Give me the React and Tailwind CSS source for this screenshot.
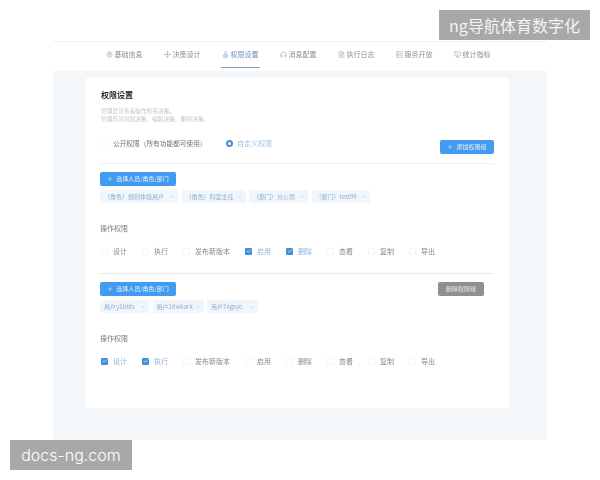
import React from "react";
import { Settings, Move, Stamp, Headphones, FileText, Server, MonitorCheck, Plus, Check, X } from "lucide-react";

const FONT = { fontFamily: '"Noto Sans CJK SC", "Noto Sans", sans-serif' };

const tabs = [
  [Settings, "基础信息"],
  [Move, "决策设计"],
  [Stamp, "权限设置", true],
  [Headphones, "消息配置"],
  [FileText, "执行日志"],
  [Server, "服务开放"],
  [MonitorCheck, "统计指标"],
];

function Tab({ icon: Icon, label, active }) {
  return (
    <div className={"flex h-[26px] w-[39px] items-center justify-center gap-[2px] border-b " + (active ? "border-[#7fa6c4] text-[#6f8fc4]" : "border-transparent text-[#8a8f96]")}>
      <Icon size={7} strokeWidth={1.5} className="shrink-0" />
      <span className="text-[7px] leading-none whitespace-nowrap">{label}</span>
    </div>
  );
}

function BlueButton({ children, className = "" }) {
  return (
    <div className={"flex h-[14px] items-center justify-center gap-[3px] rounded-[2px] bg-[#419bf0] text-[6px] leading-none text-[#e4f0fc] " + className}>
      <Plus size={6} strokeWidth={2} />
      <span className="whitespace-nowrap">{children}</span>
    </div>
  );
}

function Tag({ children, w }) {
  return (
    <div className={"flex h-[13px] items-center justify-between rounded-[2px] bg-[#eff6fc] pl-[4px] pr-[4px] text-[6px] leading-none text-[#94afd0] " + w}>
      <span className="whitespace-nowrap">{children}</span>
      <X size={4} strokeWidth={1.5} className="text-[#a9b4c0]" />
    </div>
  );
}

function Perm({ label, checked }) {
  return (
    <div className="flex items-center gap-[5px]">
      {checked ? (
        <span className="flex h-[7px] w-[7px] items-center justify-center rounded-[1px] bg-[#3f8fdc] text-white">
          <Check size={6} strokeWidth={2.5} />
        </span>
      ) : (
        <span className="h-[7px] w-[7px] rounded-[1px] border border-[#f4f5f6] bg-white" />
      )}
      <span className={"text-[7px] leading-none whitespace-nowrap " + (checked ? "text-[#8db3dc]" : "text-[#85888c]")}>{label}</span>
    </div>
  );
}

function Perms({ on }) {
  const all = ["设计", "执行", "发布新版本", "启用", "删除", "查看", "复制", "导出"];
  return (
    <div className="flex items-center gap-[15px] pl-px">
      {all.map((p) => (
        <Perm key={p} label={p} checked={on.includes(p)} />
      ))}
    </div>
  );
}

function Heading() {
  return <div className="text-[7px] leading-none text-[#777b80]">操作权限</div>;
}

export default function App() {
  return (
    <div style={FONT} className="relative h-[480px] w-[600px] overflow-hidden bg-white pt-[41px]">
      <div className="mx-[53px] w-[494px] blur-[0.35px]">
        <div className="flex h-[30px] justify-center gap-[19px] border-t border-[#eef0f2] bg-white pr-[4px]">
          {tabs.map(([icon, label, active]) => (
            <Tab key={label} icon={icon} label={label} active={active} />
          ))}
        </div>
        <div className="h-[369px] bg-[#f3f7fa] pt-[7px]">
          <div className="ml-[32px] h-[330px] w-[424px] rounded-[3px] bg-white pl-[15px] pr-[15px] pt-[12px]">
            <div className="pl-px text-[8px] font-bold leading-[10px] text-[#1f2225]">权限设置</div>
            <div className="mt-[7px] pl-px text-[5.7px] leading-[8px] text-[#c3c6ca]">
              <div>管理员可查看操作所有决策。</div>
              <div>管理员可创建决策、编辑决策、删除决策。</div>
            </div>
            <div className="mt-[10px] flex h-[20px] items-center">
              <span className="ml-px h-[7px] w-[7px] rounded-full border border-[#f4f5f6]" />
              <span className="ml-[5px] w-[113px] text-[6.7px] leading-none whitespace-nowrap text-[#6f7276]">公开权限（所有功能都可使用）</span>
              <span className="flex h-[7px] w-[7px] items-center justify-center rounded-full bg-[#4a90d9]">
                <span className="h-[3px] w-[3px] rounded-full bg-white" />
              </span>
              <span className="ml-[4px] text-[7px] leading-none text-[#a4c2e0]">自定义权限</span>
              <BlueButton className="ml-auto mt-[8px] w-[54px]">添加权限组</BlueButton>
            </div>
            <div className="mt-[10px] h-px w-[394px] bg-[#f0f1f3]" />
            <BlueButton className="mt-[8px] w-[76px]">选择人员/角色/部门</BlueButton>
            <div className="mt-[4px] flex gap-[3.5px]">
              <Tag w="w-[78px]">（角色）规则体验用户</Tag>
              <Tag w="w-[64px]">（角色）科室主任</Tag>
              <Tag w="w-[59px]">（部门）分公司</Tag>
              <Tag w="w-[58px]">（部门）test99</Tag>
            </div>
            <div className="mt-[21.5px]"><Heading /></div>
            <div className="mt-[16px]"><Perms on={["启用", "删除"]} /></div>
            <div className="mt-[18.5px] h-px w-[394px] bg-[#e9eaec]" />
            <div className="mt-[8px] flex items-start">
              <BlueButton className="w-[76px]">选择人员/角色/部门</BlueButton>
              <div className="ml-[262px] flex h-[14px] w-[46px] items-center justify-center rounded-[2px] bg-[#8f8f8f] text-[6px] leading-none text-[#e6e6e6]">删除权限组</div>
            </div>
            <div className="mt-[4px] flex gap-[3.5px]">
              <Tag w="w-[49px]">用户y5bbfs</Tag>
              <Tag w="w-[51px]">用户2dw6ark</Tag>
              <Tag w="w-[51px]">用户7ilgsyo</Tag>
            </div>
            <div className="mt-[21.5px]"><Heading /></div>
            <div className="mt-[16px]"><Perms on={["设计", "执行"]} /></div>
          </div>
        </div>
      </div>
      <div className="absolute right-[10px] top-[10px] flex h-[30px] w-[151px] items-center justify-center bg-[#a8a8a8] text-[16px] font-normal text-[#f4f4f4]">ng导航体育数字化</div>
      <div className="absolute bottom-[10px] left-[10px] flex h-[30px] w-[122px] items-center justify-center bg-[#a8a8a8] text-[16px] font-light text-white" style={{ fontFamily: 'Inter, sans-serif' }}>docs-ng.com</div>
    </div>
  );
}
